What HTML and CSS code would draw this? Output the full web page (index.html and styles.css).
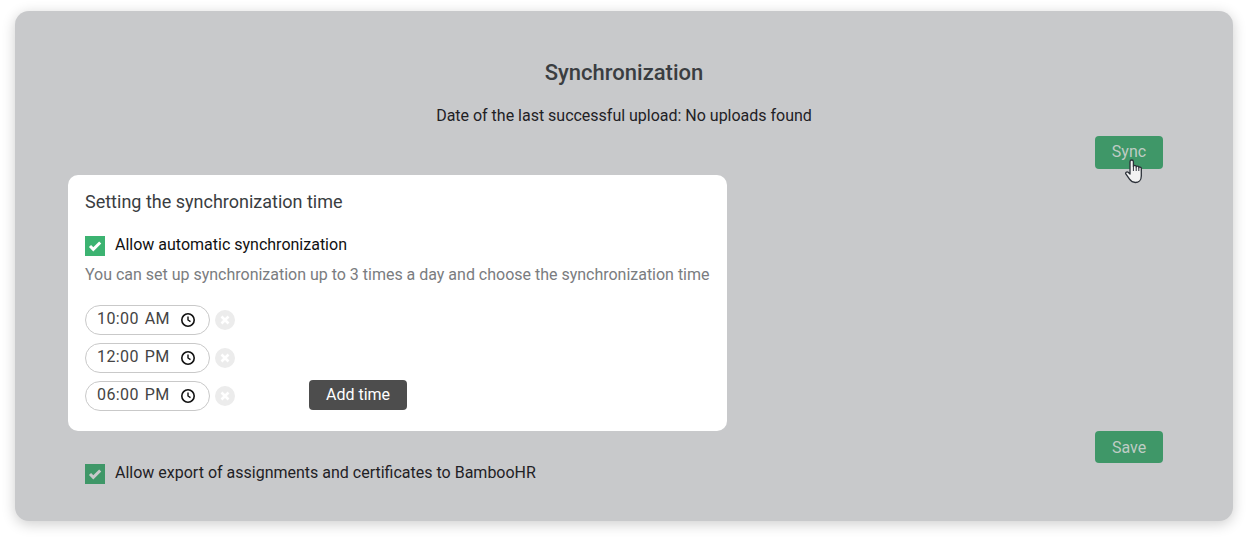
FILE: index.html
```html
<!DOCTYPE html>
<html lang="en">
<head>
<meta charset="UTF-8" />
<meta name="viewport" content="width=device-width, initial-scale=1" />
<title>Synchronization</title>
<link rel="stylesheet" href="styles.css">
</head>
<body>

<div class="panel">
  <h2 class="panel-title">Synchronization</h2>
  <p class="last-upload">Date of the last successful upload: No uploads found</p>

  <div class="sync-row">
    <button class="btn-green sync-btn">Sync
      <svg class="hand-cursor" width="18" height="25" viewBox="0 0 18 25">
        <path d="M5 2.700a1.700 1.700 0 0 1 3.400 0V7.500c0-1.400 2.800-1.400 2.800 0v.6c0-1.300 2.600-1.300 2.600 0v.7c0-1.200 2.500-1 2.500.5V17c0 4-2.600 6.500-6 6.500-3 0-4.400-1.300-5.800-3.300L1 15.200c-1-1.500.8-3 2.200-1.900L5 15z" fill="#f2f2f2" stroke="#2b3038" stroke-width="1.300" stroke-linejoin="round"/>
        <path d="M8.400 7.500v4.500M11.200 8.100v3.900M13.800 8.800v3.200" fill="none" stroke="#2b3038" stroke-width="1"/>
      </svg>
    </button>
  </div>

  <div class="middle-row">
    <div class="time-card">
      <h3>Setting the synchronization time</h3>
      <label class="check-row">
        <span class="checkbox">
          <svg width="14" height="12" viewBox="0 0 14 12"><path d="M2 6l3.300 3.300L12.200 2.500" fill="none" stroke="#fff" stroke-width="3"/></svg>
        </span>
        Allow automatic synchronization
      </label>
      <p class="hint">You can set up synchronization up to 3 times a day and choose the synchronization time</p>

      <div class="times-wrap">
        <div class="times">
          <div class="time-row">
            <div class="time-input">
              <span>10:00 AM</span>
              <svg class="clock" width="16" height="16" viewBox="0 0 16 16"><circle cx="8" cy="8" r="6.200" fill="none" stroke="#111" stroke-width="1.600"/><path d="M8 4.500V8l2.500 1.700" fill="none" stroke="#111" stroke-width="1.400"/></svg>
            </div>
            <span class="remove"><svg width="10" height="10" viewBox="0 0 10 10"><path d="M1.500 1.500l7 7M8.500 1.500l-7 7" stroke="#fff" stroke-width="2.600"/></svg></span>
          </div>
          <div class="time-row">
            <div class="time-input">
              <span>12:00 PM</span>
              <svg class="clock" width="16" height="16" viewBox="0 0 16 16"><circle cx="8" cy="8" r="6.200" fill="none" stroke="#111" stroke-width="1.600"/><path d="M8 4.500V8l2.500 1.700" fill="none" stroke="#111" stroke-width="1.400"/></svg>
            </div>
            <span class="remove"><svg width="10" height="10" viewBox="0 0 10 10"><path d="M1.500 1.500l7 7M8.500 1.500l-7 7" stroke="#fff" stroke-width="2.600"/></svg></span>
          </div>
          <div class="time-row">
            <div class="time-input">
              <span>06:00 PM</span>
              <svg class="clock" width="16" height="16" viewBox="0 0 16 16"><circle cx="8" cy="8" r="6.200" fill="none" stroke="#111" stroke-width="1.600"/><path d="M8 4.500V8l2.500 1.700" fill="none" stroke="#111" stroke-width="1.400"/></svg>
            </div>
            <span class="remove"><svg width="10" height="10" viewBox="0 0 10 10"><path d="M1.500 1.500l7 7M8.500 1.500l-7 7" stroke="#fff" stroke-width="2.600"/></svg></span>
          </div>
        </div>
        <button class="add-time">Add time</button>
      </div>
    </div>
    <button class="btn-green save-btn">Save</button>
  </div>

  <label class="check-row export-row">
    <span class="checkbox dimmed">
      <svg width="14" height="12" viewBox="0 0 14 12"><path d="M2 6l3.300 3.300L12.200 2.500" fill="none" stroke="#c8c9cb" stroke-width="3"/></svg>
    </span>
    Allow export of assignments and certificates to BambooHR
  </label>
</div>

</body>
</html>
```

FILE: styles.css
```css
html, body { height: 541px; }
body { margin: 0; padding-top: 11px; box-sizing: border-box; background: #fff; font-family: Roboto, sans-serif; font-size: 16px; color: #1f2125; overflow: hidden; }
p { margin: 0; }

.panel {
  margin: 0 15px; height: 510px; box-sizing: border-box; padding-top: 50px;
  background: #c8c9cb; border-radius: 14px; box-shadow: 0 3px 14px rgba(0,0,0,.2);
}
.panel-title {
  margin: 0; text-align: center; font-size: 22px; line-height: 24px; font-weight: 500; color: #3a3d41;
}
.last-upload { margin-top: 21px; text-align: center; line-height: 20px; letter-spacing: -.01px; }

.btn-green {
  width: 68px; background: #3f9768; color: #bfccc5; border: none; border-radius: 4px;
  font-family: inherit; font-size: 16px; padding: 0; cursor: pointer;
}
.sync-row { display: flex; justify-content: flex-end; margin-top: 10px; padding-right: 70px; }
.sync-btn { position: relative; height: 33px; padding-bottom: 2px; }
.hand-cursor { position: absolute; left: 30px; top: 23px; }

.middle-row { display: flex; justify-content: space-between; align-items: flex-end; margin-top: 6px; padding: 0 70px 0 53px; }
.save-btn { height: 32px; margin-bottom: -32px; }

.time-card {
  width: 659px; height: 256px; box-sizing: border-box; padding: 16px 17px 0;
  background: #fff; border-radius: 10px;
}
.time-card h3 { margin: 0; font-size: 18px; line-height: 22px; font-weight: 400; color: #3a3d41; }

.check-row { display: flex; align-items: flex-start; gap: 10px; line-height: 18px; color: #111; }
.time-card .check-row { margin-top: 23px; }
.checkbox {
  width: 20px; height: 20px; background: #3cb371; display: flex; align-items: center; justify-content: center;
}
.checkbox.dimmed { background: #3f9768; }
.hint { margin-top: 9px; line-height: 20px; color: #7a7c80; white-space: nowrap; letter-spacing: -.01px; }

.times-wrap { display: flex; align-items: flex-end; margin-top: 20px; }
.times { display: flex; flex-direction: column; gap: 8px; }
.time-row { display: flex; align-items: center; gap: 5px; }
.time-input {
  width: 125px; height: 30px; box-sizing: border-box; padding: 0 13.5px 0 11px;
  display: flex; align-items: center; justify-content: space-between;
  border: 1px solid #c9c9c9; border-radius: 15px; color: #444; letter-spacing: .4px; word-spacing: 1.5px;
}
.time-input span { margin-top: -3px; }
.clock { margin-top: -1px; }
.remove {
  width: 20px; height: 20px; border-radius: 50%; background: #ececec;
  display: flex; align-items: center; justify-content: center;
}
.add-time {
  width: 98px; height: 30px; margin: 0 0 1px 74px; background: #4d4d4d; color: #fff; border: none; border-radius: 4px;
  font-family: inherit; font-size: 16px; padding: 0 0 2px; cursor: pointer;
}
.export-row { margin: 33px 0 0 70px; color: #1f2125; }
```
